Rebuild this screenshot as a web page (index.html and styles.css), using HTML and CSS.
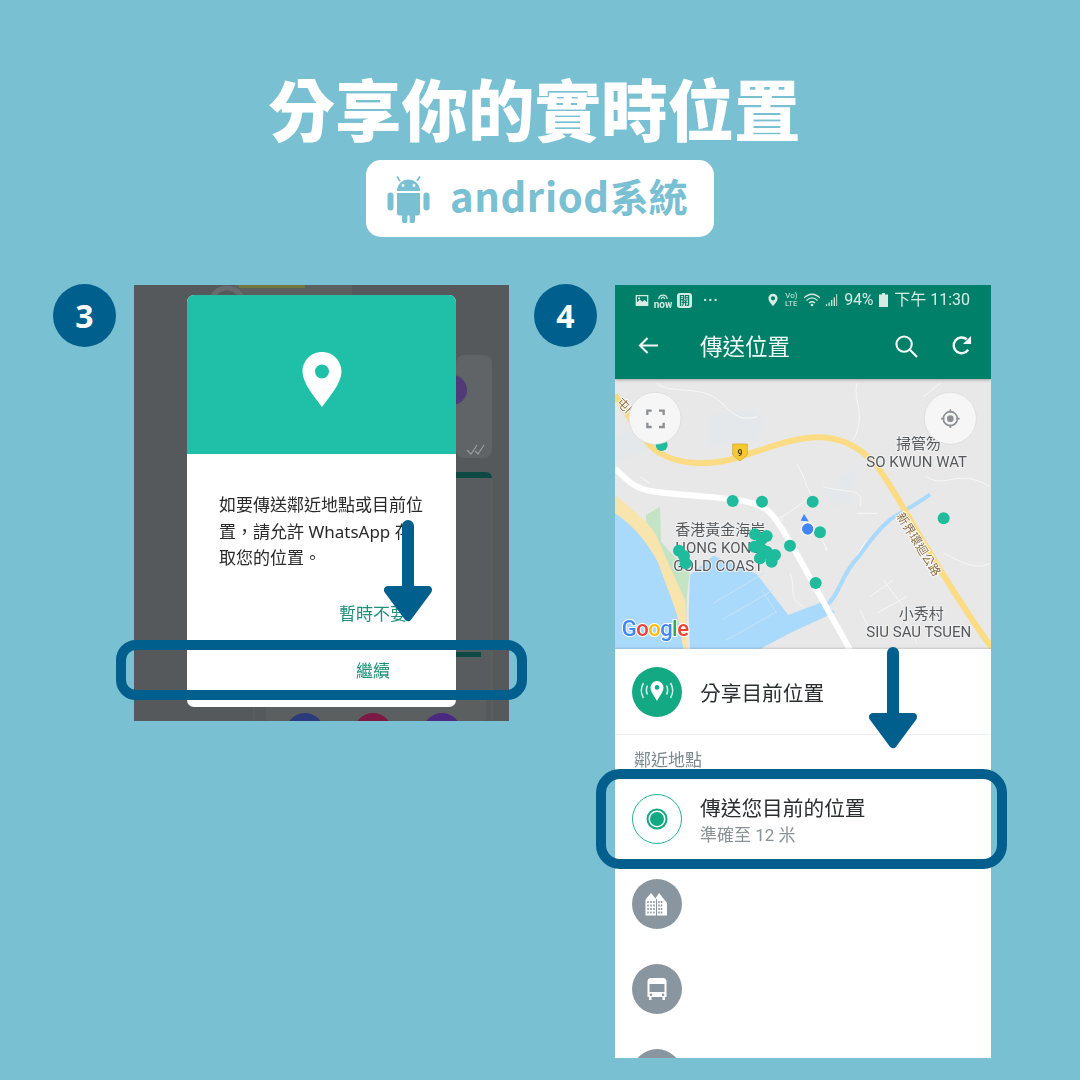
FILE: index.html
```html
<!DOCTYPE html>
<html lang="zh-Hant">
<head>
<meta charset="utf-8">
<title>分享你的實時位置</title>
<link rel="stylesheet" href="styles.css">
</head>
<body>
<main class="page">
  <header class="head">
    <h1 class="title">分享你的實時位置</h1>
    <div class="pill">
      <svg class="android" viewBox="0 0 43 48">
        <path d="M10 16a11.500 11.500 0 0 1 23 0z"/>
        <path d="M13 6 10 1.500M30 6l3-4.500" class="android-ant"/>
        <circle cx="16" cy="10.500" r="1.400" class="android-eye"/>
        <circle cx="27" cy="10.500" r="1.400" class="android-eye"/>
        <path d="M10 18h23v20a2.500 2.500 0 0 1-2.500 2.500H28v5.200a2.700 2.700 0 0 1-5.400 0v-5.200h-2.200v5.200a2.700 2.700 0 0 1-5.400 0v-5.200h-2.500A2.500 2.500 0 0 1 10 38z"/>
        <rect x="0.500" y="17.500" width="6" height="18" rx="3"/>
        <rect x="36.500" y="17.500" width="6" height="18" rx="3"/>
      </svg>
      <span class="pill-text"><span class="pill-latin">andriod</span>系統</span>
    </div>
  </header>

  <section class="steps">
    <article class="step step-one">
      <div class="badge">3</div>
      <div class="shot shot-dialog">
        <svg class="chat-bg" viewBox="0 0 375 436">
          <rect x="100" y="-8" width="118" height="22" fill="#5c6060"/>
          <rect x="105" y="0" width="66" height="3" fill="#74773f"/>
          <circle cx="93" cy="20" r="17" fill="none" stroke="#696c6d" stroke-width="5"/>
          <rect x="322" y="70" width="36" height="103" rx="8" fill="#606466"/>
          <circle cx="318" cy="105" r="15" fill="#503a78"/>
          <path d="M333 165l4 4 6-9M341 166l3 3 6-9" stroke="#9a9d9e" stroke-width="1.200" fill="none"/>
          <path d="M322 193v-6h30a6 6 0 0 1 6 6z" fill="#0e4a43"/>
          <rect x="322" y="193" width="36" height="215" fill="#585c5e"/>
          <rect x="322" y="367" width="25" height="5" fill="#0e4a43"/>
          <rect x="132" y="408" width="220" height="30" fill="#5b5f60"/>
          <circle cx="171" cy="447" r="19" fill="#2a3a7a"/>
          <circle cx="239" cy="447" r="19" fill="#7c1a44"/>
          <circle cx="308" cy="447" r="19" fill="#4a2a80"/>
          <path d="M120 405v31M358 193v243" stroke="#5a645c" stroke-width="1"/>
        </svg>
        <div class="dialog">
          <div class="dialog-hero">
            <svg class="hero-pin" viewBox="0 0 40 56">
              <path fill-rule="evenodd" d="M20 0C9 0 .500 8.700.500 19.500.500 31 12 44 20 55c8-11 19.500-24 19.500-35.500C39.500 8.700 31 0 20 0zm0 26.500a7 7 0 1 1 0-14 7 7 0 0 1 0 14z"/>
            </svg>
          </div>
          <p class="dialog-text">如要傳送鄰近地點或目前位置，請允許 WhatsApp 存取您的位置。</p>
          <div class="dialog-actions">
            <span class="dialog-btn">暫時不要</span>
            <span class="dialog-btn">繼續</span>
          </div>
        </div>
      </div>
      <div class="focus-box focus-box-one"></div>
      <svg class="arrow arrow-one" viewBox="0 0 48 106"><path d="M24 6v60"/><path class="arrow-head" d="M4 70h40L24 97z"/></svg>
    </article>

    <article class="step step-two">
      <div class="badge">4</div>
      <div class="shot shot-phone">
        <div class="appbar">
          <div class="status">
            <div class="status-left">
              <svg class="st st-pic" viewBox="0 0 15 13"><path fill-rule="evenodd" d="M0 0h15v13H0zM1.500 1.500v7l3.500-3 3 2.500 2.500-2 3 2.500V1.500z"/><circle cx="4" cy="4" r="1.300"/></svg>
              <span class="st-now">
                <svg class="st-now-arc" viewBox="0 0 14 9"><path d="M2 8C3 2 11 2 12 8M5 8c1-3 3-3 4 0"/></svg>
                <span class="st-now-text">now</span>
              </span>
              <span class="st-open">開</span>
              <span class="st-dots">···</span>
            </div>
            <div class="status-right">
              <svg class="st st-pin" viewBox="0 0 12 15"><path fill-rule="evenodd" d="M6 0a5.500 5.500 0 0 0-5.500 5.500C.500 9 4 12.500 6 15c2-2.500 5.500-6 5.500-9.500A5.500 5.500 0 0 0 6 0zm0 8a2.500 2.500 0 1 1 0-5 2.500 2.500 0 0 1 0 5z"/></svg>
              <span class="st-lte">Vo)<br>LTE</span>
              <svg class="st st-wifi" viewBox="0 0 18 14"><path d="M1 5c5-5 11-5 16 0M3.500 7.500c3.500-3.300 7.500-3.300 11 0M6 10c2-1.700 4-1.700 6 0" /><circle cx="9" cy="12" r="1.300" class="st-fill"/></svg>
              <svg class="st st-signal" viewBox="0 0 15 14"><path d="M1 12v2h1.500v-2zM4 10v4h1.500v-4zM7 7v7h1.500V7zM10 4v10h1.500V4zM13 0v14h1V0z"/></svg>
              <span class="st-text st-pct">94%</span>
              <svg class="st st-batt" viewBox="0 0 9 14"><path d="M3 0h3v1.500h3V14H0V1.500h3z"/></svg>
              <span class="st-text st-time">下午 11:30</span>
            </div>
          </div>
          <div class="toolbar">
            <svg class="tb-icon tb-back" viewBox="0 0 22 20"><path d="M21 10H2M10 2l-8 8 8 8"/></svg>
            <span class="tb-title">傳送位置</span>
            <svg class="tb-icon tb-search" viewBox="0 0 24 24"><circle cx="9.500" cy="9.500" r="8"/><path d="M15.500 15.500l7.500 7.500"/></svg>
            <svg class="tb-icon tb-refresh" viewBox="0 0 22 22"><path d="M18 15.500A8.300 8.300 0 1 1 16.500 4.500"/><path class="tb-fill" d="M21 1v8.500h-8.500z"/></svg>
          </div>
        </div>

        <svg class="map" viewBox="15 297 1128 810">
          <rect x="15" y="297" width="1128" height="810" fill="#e8e8e8"/>
          <path d="M300 400l130-10 40 30-30 60-150 20zM15 470l60-20 40 60-100 40zM640 630l70-20 20 50-60 20zM690 590l60-30-20 70-40 10z" fill="#e5e8ea"/>
          <g class="minor">
            <path d="M140 310c30 30 120 10 170 40s60 80 130 60M740 310c-10 60 30 90-10 170M990 310l-50 40M950 590c60 40 90-30 190 30M560 550c30 50 30 90 60 110M640 620c60 20 130 0 110 60M510 715l80-55M620 740l30 70M740 700l60 0M90 590l30 20M720 860l50-80M1000 820c60 30 100 50 140 30M540 880c20 50-10 70 40 100M780 950l70-50M820 900l60 80M800 1000l90-50M880 1010l40 80M750 990l40 80M690 1070l40 40"/>
            <circle cx="512" cy="716" r="6"/>
            <circle cx="648" cy="806" r="4"/>
          </g>
          <path d="M108 705l42-25 3 105 85 95-8 80-2 147h-60l-60-300z" fill="#c5e4c6"/>
          <path d="M15 645C70 690 115 725 138 765l37 85 50 110 8 147H15z" fill="#f8e5ae"/>
          <path d="M15 700C60 730 110 780 145 850c25 70 50 130 60 170l15 87H15z" fill="#a9d9fb"/>
          <path d="M240 885l70-58 130 55 95 123 100-38 40 30-130 60-95 50H240l-4-110z" fill="#a9d9fb"/>
          <path d="M650 975c40-30 40-90 100-150 30-45 70-90 95-110 40-25 80-45 115-72" fill="none" stroke="#a9d9fb" stroke-width="12"/>
          <path d="M310 970l150-90M335 1020l155-90M350 1080l150-85M455 930l45 70" fill="none" stroke="#c6e4f8" stroke-width="3"/>
          <path d="M15 565c40 40 60 62 120 70 60 8 170 15 240 24 60 8 90 20 115 50 40 50 90 150 130 220l100 180" fill="none" stroke="#fff" stroke-width="18"/>
          <path d="M15 345c35 50 75 130 120 165 60 45 160 50 250 22 90-28 180-65 250-60 80 5 130 42 170 92 50 70 80 130 125 205 70 115 140 235 220 340" fill="none" stroke="#fbdc85" stroke-width="18"/>
          <path d="M368 492h44v33l-22 18-22-18z" fill="#f5c92f" stroke="#c9a221" stroke-width="2"/>
          <text class="m-shield" x="390" y="527">9</text>
          <text class="m-road" transform="translate(18 370) rotate(45)">屯門公路</text>
          <text class="m-road" transform="translate(858 708) rotate(58)">新界環迴公路</text>
          <text class="m-label" x="858" y="506">掃管笏</text>
          <text class="m-label" x="769" y="560">SO KWUN WAT</text>
          <text class="m-label" x="196" y="766">香港黃金海岸</text>
          <text class="m-label" x="196" y="820">HONG KONG</text>
          <text class="m-label" x="190" y="873">GOLD COAST</text>
          <text class="m-label" x="866" y="1018">小秀村</text>
          <text class="m-label" x="769" y="1070">SIU SAU TSUEN</text>
          <g class="dots">
            <circle cx="155" cy="495" r="18"/><circle cx="368" cy="663" r="18"/><circle cx="456" cy="665" r="18"/>
            <circle cx="608" cy="665" r="18"/><circle cx="630" cy="757" r="18"/><circle cx="540" cy="797" r="18"/>
            <circle cx="617" cy="909" r="18"/><circle cx="1001" cy="715" r="18"/>
            <circle cx="207" cy="812" r="18"/><circle cx="222" cy="828" r="18"/><circle cx="227" cy="850" r="18"/>
            <circle cx="470" cy="768" r="18"/><circle cx="435" cy="763" r="18"/><circle cx="455" cy="778" r="18"/>
            <circle cx="495" cy="825" r="18"/><circle cx="470" cy="815" r="18"/><circle cx="433" cy="800" r="18"/><circle cx="455" cy="808" r="18"/>
            <circle cx="483" cy="828" r="18"/><circle cx="450" cy="835" r="18"/><circle cx="485" cy="845" r="18"/>
          </g>
          <path d="M582 702l14 22-24-2z" fill="#4285f4"/>
          <circle cx="593" cy="747" r="19" fill="#4285f4" stroke="#fff" stroke-width="4"/>
          <text class="m-google" x="35" y="1069"><tspan class="g-blue">G</tspan><tspan class="g-red">o</tspan><tspan class="g-yellow">o</tspan><tspan class="g-blue">g</tspan><tspan class="g-green">l</tspan><tspan class="g-red">e</tspan></text>
          <circle cx="135" cy="415" r="78" class="map-btn"/>
          <circle cx="1021" cy="415" r="78" class="map-btn"/>
          <path d="M112 405v-13h13M147 392h14v13M161 428v13h-14M125 441h-13v-13" fill="none" stroke="#8b9094" stroke-width="7"/>
          <circle cx="1021" cy="416" r="21" fill="none" stroke="#8b9094" stroke-width="5"/>
          <circle cx="1021" cy="416" r="10" fill="#8b9094"/>
          <path d="M1021 388v10M1021 434v10M993 416h10M1039 416h10" stroke="#8b9094" stroke-width="5"/>
        </svg>

        <div class="list">
          <div class="row row-share">
            <div class="ic ic-green">
              <svg viewBox="0 0 50 50"><path class="ic-wave" d="M15.500 18.500c-1.500 3-1.500 6 0 9M11.500 16c-3 5-3 10 0 15M34.500 18.500c1.500 3 1.500 6 0 9M38.500 16c3 5 3 10 0 15"/><path fill-rule="evenodd" fill="#fff" d="M25 14a6.500 6.500 0 0 0-6.500 6.500c0 4.500 4 8.500 6.500 13.500 2.500-5 6.500-9 6.500-13.500A6.500 6.500 0 0 0 25 14zm0 8.700a2.300 2.300 0 1 1 0-4.600 2.300 2.300 0 0 1 0 4.600z"/></svg>
            </div>
            <div class="row-title">分享目前位置</div>
          </div>
          <div class="section-label">鄰近地點</div>
          <div class="row row-current">
            <div class="ic ic-ring"><span class="ring-dot"></span></div>
            <div class="row-body">
              <div class="row-title row-title-tight">傳送您目前的位置</div>
              <div class="row-sub">準確至 12 米</div>
            </div>
          </div>
          <div class="row row-place">
            <div class="ic ic-gray">
              <svg viewBox="0 0 50 50"><path fill="#fff" d="M13.500 36.500V20.500L19 14l4.500 5.500L27 14l8 10v12.500z"/><path stroke="#8a969f" stroke-width="1" d="M24.500 20v17"/><path stroke="#8a969f" stroke-width="1.500" stroke-dasharray="2 1.500" d="M16 22v14M19 22v14M22 22v14M27 22v14M29.500 22v14"/></svg>
            </div>
          </div>
          <div class="row row-place">
            <div class="ic ic-gray">
              <svg viewBox="0 0 50 50"><path fill="#fff" fill-rule="evenodd" d="M19 14h12a3.500 3.500 0 0 1 3.500 3.500V33h-1.500v3h-2.500v-3h-11v3H17v-3h-1.500V17.500A3.500 3.500 0 0 1 19 14zm-1.500 6v8h15v-8zm1.500 9.500a1.300 1.300 0 1 0 0 2.600 1.300 1.300 0 0 0 0-2.600zm12 0a1.300 1.300 0 1 0 0 2.600 1.300 1.300 0 0 0 0-2.600z"/></svg>
            </div>
          </div>
          <div class="row row-place">
            <div class="ic ic-gray"></div>
          </div>
        </div>
      </div>
      <div class="focus-box focus-box-two"></div>
      <svg class="arrow arrow-two" viewBox="0 0 48 106"><path d="M24 6v60"/><path class="arrow-head" d="M4 70h40L24 97z"/></svg>
    </article>
  </section>
</main>
</body>
</html>
```

FILE: styles.css
```css
* { box-sizing: border-box; }
html, body { margin: 0; padding: 0; }
body { background: #79c0d3; font-family: "Noto Sans CJK TC", sans-serif; }
.page { width: 1080px; height: 1080px; overflow: hidden; background: #79c0d3; display: flex; flex-direction: column; }

.head { display: flex; flex-direction: column; align-items: center; padding-top: 60px; }
.title { margin: 0 11px 6px 0; font-size: 66.500px; line-height: 94px; height: 94px; font-weight: 900; color: #fff; letter-spacing: 0; }
.pill { width: 348px; height: 77px; background: #fff; border-radius: 15px; display: flex; align-items: center; padding-left: 21px; gap: 20px; }
.android { width: 43px; height: 48px; fill: #79c0d3; flex: none; }
.android-ant { stroke: #79c0d3; stroke-width: 1.800; fill: none; }
.android-eye { fill: #fff; }
.pill-text { font-size: 39px; line-height: 1; font-weight: 700; color: #79c0d3; margin-bottom: 8px; white-space: nowrap; }
.pill-latin { font-size: 40px; letter-spacing: .6px; }

.steps { display: flex; padding: 47px 0 0 53px; }
.step { position: relative; display: flex; gap: 18px; align-items: flex-start; }
.step-one { width: 481px; }
.badge { width: 63px; height: 63px; flex: none; border-radius: 50%; background: #005f8c; color: #fff; font-family: "Open Sans", sans-serif; font-weight: 700; font-size: 32px; display: flex; align-items: center; justify-content: center; }
.shot { overflow: hidden; flex: none; position: relative; filter: blur(.35px); margin-top: 1px; }

.shot-dialog { width: 375px; height: 436px; background: #55595b; padding: 10px 0 0 53px; }
.chat-bg { position: absolute; left: 0; top: 0; width: 375px; height: 436px; }
.dialog { position: relative; width: 269px; height: 412px; background: #fff; border-radius: 7px; overflow: hidden; display: flex; flex-direction: column; }
.dialog-hero { height: 159px; background: #1fc0a7; display: flex; align-items: center; justify-content: center; flex: none; }
.hero-pin { width: 40px; height: 56px; fill: #fff; margin-top: 11px; }
.dialog-text { margin: 38px 0 0 32px; width: 207px; font: 400 17px/26.700px "Noto Sans", "Noto Sans CJK TC", sans-serif; color: #2a2a2a; }
.dialog-actions { display: grid; justify-items: center; width: 68px; margin: 28px 0 0 152px; row-gap: 31px; }
.dialog-btn { font: 400 17px/26px "Noto Sans CJK TC", sans-serif; color: #1f8f7a; white-space: nowrap; }

.focus-box { position: absolute; border: 10px solid #005f8c; border-radius: 24px; }
.focus-box-one { left: 63px; top: 356px; width: 411px; height: 60px; border-radius: 20px; }
.focus-box-two { left: 62px; top: 485px; width: 411px; height: 100px; }
.arrow { position: absolute; width: 48px; height: 106px; fill: none; stroke: #005f8c; stroke-width: 12px; stroke-linecap: round; stroke-linejoin: round; }
.arrow-head { fill: #005f8c; stroke-width: 8px; }
.arrow-one { left: 331px; top: 236px; }
.arrow-two { left: 335px; top: 363px; }

.shot-phone { width: 376px; height: 773px; background: #fff; display: flex; flex-direction: column; }
.appbar { height: 94px; background: #008069; flex: none; position: relative; box-shadow: 0 1px 3px rgba(0,0,0,.3); z-index: 1; }
.status { height: 30px; display: flex; justify-content: space-between; align-items: center; padding: 0 21px 0 20px; color: #d5ebe4; }
.status-left, .status-right { display: flex; align-items: center; }
.st { display: block; fill: #d5ebe4; flex: none; }
.st-pic { width: 14px; height: 11px; }
.st-now { width: 16px; margin-left: 6px; display: flex; flex-direction: column; align-items: center; }
.st-now-arc { display: block; width: 12px; height: 8px; fill: none; stroke: #d5ebe4; stroke-width: 1.500; }
.st-now-text { font: 700 10px/9px Roboto, sans-serif; }
.st-open { width: 15px; height: 15px; margin-left: 6px; background: #d5ebe4; color: #008069; border-radius: 3px; font-size: 11px; line-height: 15px; text-align: center; font-weight: 700; }
.st-dots { font: 700 14px/14px Roboto, sans-serif; margin-left: 11px; letter-spacing: 1px; }
.st-pin { width: 10px; height: 14px; }
.st-lte { font: 400 8px/8px Roboto, sans-serif; width: 14px; margin-left: 6px; text-align: center; }
.st-wifi { width: 18px; height: 14px; margin-left: 5px; fill: none; stroke: #d5ebe4; stroke-width: 1.300; }
.st-fill { fill: #d5ebe4; stroke: none; }
.st-signal { width: 13px; height: 14px; margin-left: 4px; }
.st-text { font: 400 16px/20px Roboto, "Noto Sans CJK TC", sans-serif; white-space: nowrap; }
.st-pct { margin-left: 6px; letter-spacing: -.3px; }
.st-batt { width: 9px; height: 14px; margin-left: 6px; }
.st-time { margin-left: 6px; }
.toolbar { height: 64px; display: flex; align-items: center; padding: 0 19px 3px 23px; color: #f2faf7; }
.tb-icon { fill: none; stroke: #f2faf7; stroke-width: 2.200; flex: none; }
.tb-back { width: 21px; height: 19px; }
.tb-title { font-size: 22.500px; line-height: 30px; margin: 0 0 2px 41px; width: 197px; }
.tb-search { width: 23px; height: 23px; margin-top: 2px; }
.tb-refresh { width: 21px; height: 21px; margin-left: 33px; stroke-width: 2.600; }
.tb-fill { fill: #f2faf7; stroke: none; }

.map { display: block; width: 376px; height: 270px; flex: none; }
.minor { fill: none; stroke: #f7f7f7; stroke-width: 3; }
.m-label { font: 400 45px Roboto, "Noto Sans CJK TC", sans-serif; fill: #55595c; stroke: #f1f1f1; stroke-width: 6px; paint-order: stroke; }
.m-road { font: 400 36px "Noto Sans CJK TC", sans-serif; fill: #8d6a3e; stroke: #fff; stroke-width: 5px; paint-order: stroke; }
.m-shield { font: 700 26px Roboto, sans-serif; fill: #4a3f10; text-anchor: middle; }
.dots { fill: #1fbb9d; }
.map-btn { fill: #f6f6f6; stroke: #d8d8d8; stroke-width: 2; }
.m-google { font: 500 66px Roboto, sans-serif; stroke: #fff; stroke-width: 6px; paint-order: stroke; letter-spacing: -1.500px; }
.g-blue { fill: #4285f4; } .g-red { fill: #ea4335; } .g-yellow { fill: #fbbc05; } .g-green { fill: #34a853; }

.list { flex: 1; background: #fff; display: flex; flex-direction: column; box-shadow: 0 -1px 2px rgba(0,0,0,.15); position: relative; }
.row { display: flex; align-items: center; gap: 18px; padding-left: 17px; flex: none; }
.row-share { height: 86px; border-bottom: 1px solid #f0f0f0; }
.section-label { height: 42px; padding: 11px 0 0 19px; font-size: 17px; line-height: 26px; color: #7d8a8e; }
.row-current { height: 84px; }
.row-place { height: 85px; }
.ic { width: 50px; height: 50px; border-radius: 50%; flex: none; display: flex; align-items: center; justify-content: center; }
.ic svg { display: block; width: 50px; height: 50px; }
.ic-wave { fill: none; stroke: #cfeee5; stroke-width: 1.600; }
.ic-green { background: #12a983; }
.ic-gray { background: #8a969f; }
.ic-ring { border: 1.500px solid #1fb595; }
.ring-dot { width: 14px; height: 14px; border-radius: 50%; background: #12a983; box-shadow: 0 0 0 1.500px #fff, 0 0 0 3.500px #12a983; }
.row-title { font-size: 20.700px; line-height: 28px; color: #2b2f30; white-space: nowrap; }
.row-title-tight { margin-top: 1px; }
.row-sub { font: 400 17px/22px Roboto, "Noto Sans CJK TC", sans-serif; color: #8a9194; margin-top: 3px; white-space: nowrap; }
```
